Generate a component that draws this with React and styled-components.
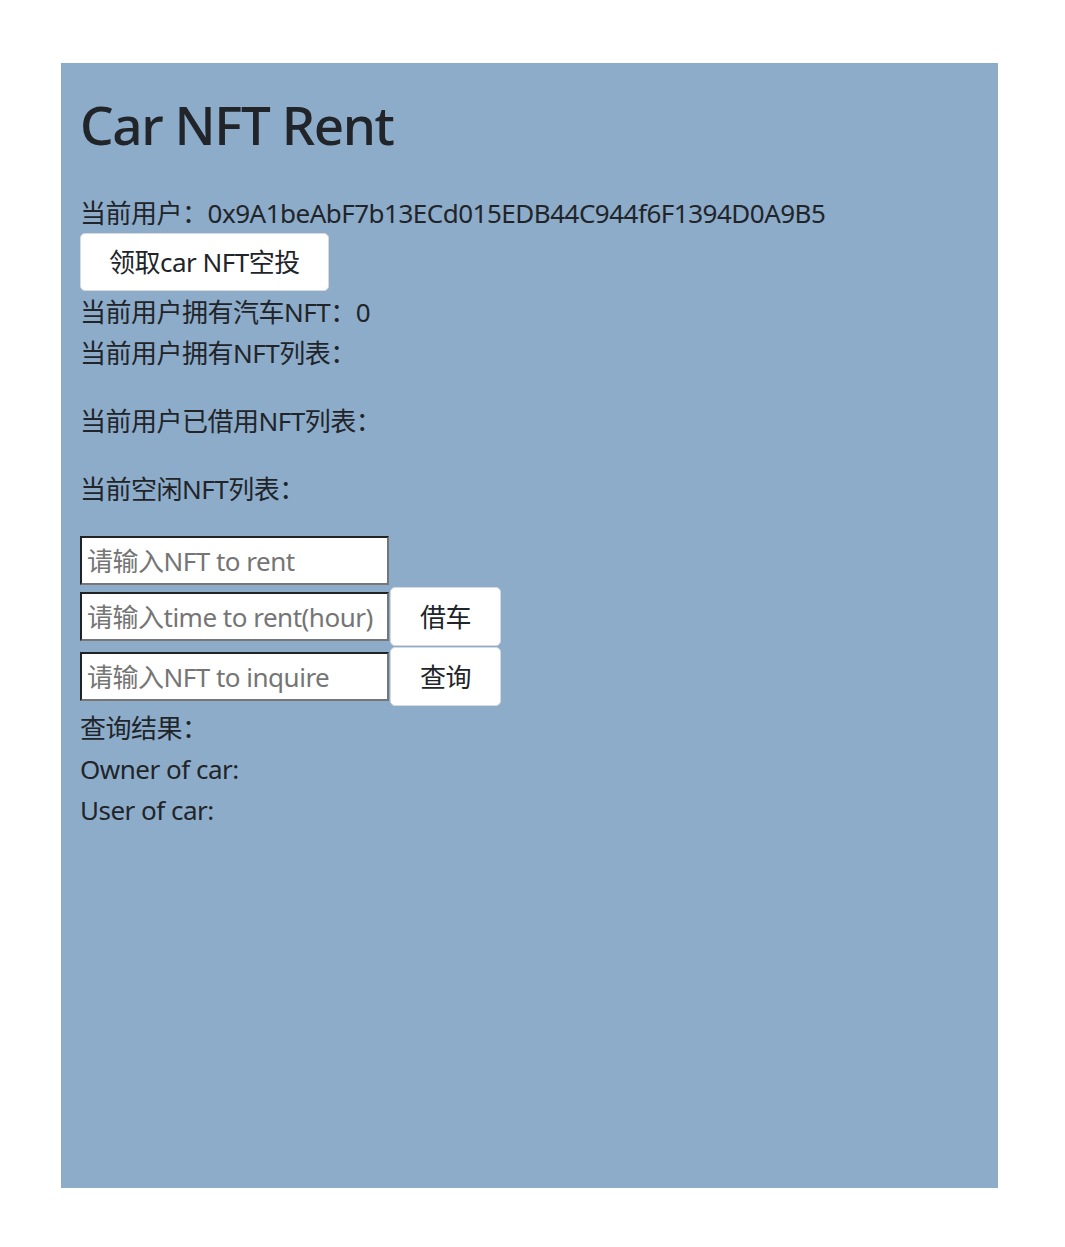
import React from "react";
import styled, { createGlobalStyle } from "styled-components";

const GlobalStyle = createGlobalStyle`
  html, body {
    margin: 0;
    padding: 0;
    background: #ffffff;
  }
  body {
    font-family: "Noto Sans", "Noto Sans CJK SC", sans-serif;
    color: #212529;
  }
`;

const Page = styled.div`
  padding: 63px 0 59px 61px;
`;

const Panel = styled.div`
  width: 937px;
  height: 1125px;
  box-sizing: border-box;
  background-color: #8dacca;
  padding: 26px 19px;
  font-size: 26px;
  line-height: 41px;
  letter-spacing: -0.5px;
`;

const Title = styled.h1`
  margin: 0 0 33px;
  font-size: 53px;
  font-weight: 500;
  line-height: 71px;
  letter-spacing: -1.4px;
`;

const Line = styled.div`
  white-space: nowrap;
`;

const List = styled.ul`
  margin: 0 0 27px;
  padding: 0;
  list-style: none;
`;

const Button = styled.button`
  display: block;
  font-family: inherit;
  font-size: 26px;
  line-height: 40px;
  letter-spacing: -0.5px;
  color: #212529;
  background-color: #ffffff;
  border: 1px solid #d6d9dd;
  border-radius: 5px;
  padding: 8px ${(p) => p.$px || 27}px;
  margin: ${(p) => p.$mt || 0}px 0 ${(p) => p.$mb || 0}px;
  cursor: pointer;
  box-sizing: border-box;
`;

const Form = styled.div`
  display: flex;
  flex-direction: column;
  margin-top: -1px;
  margin-bottom: 2px;
`;

const Row = styled.div`
  display: flex;
  align-items: center;
  margin-bottom: ${(p) => p.$mb || 0}px;
`;

const Input = styled.input`
  width: 309px;
  height: 49px;
  box-sizing: border-box;
  border: 2px solid #767676;
  border-top-color: #222222;
  border-left-color: #222222;
  padding: 0 5px;
  font-family: inherit;
  font-size: 26px;
  letter-spacing: -0.5px;
  color: #212529;
  background: #ffffff;
  outline: none;
  &::placeholder {
    color: #757575;
  }
`;

const RowButton = styled(Button)`
  width: 111px;
  height: 59px;
  padding: 0;
  margin: 0 0 0 1px;
`;

function App() {
  const address = "0x9A1beAbF7b13ECd015EDB44C944f6F1394D0A9B5";

  return (
    <>
      <GlobalStyle />
      <Page>
        <Panel>
          <Title>Car NFT Rent</Title>
          <Line>当前用户：{address}</Line>
          <Button $px={28} $mt={-1} $mb={1}>
            领取car NFT空投
          </Button>
          <Line>当前用户拥有汽车NFT：0</Line>
          <Line>当前用户拥有NFT列表：</Line>
          <List />
          <Line>当前用户已借用NFT列表：</Line>
          <List />
          <Line>当前空闲NFT列表：</Line>
          <List />
          <Form>
            <Row $mb={2}>
              <Input placeholder="请输入NFT to rent" />
            </Row>
            <Row $mb={1}>
              <Input placeholder="请输入time to rent(hour)" />
              <RowButton>借车</RowButton>
            </Row>
            <Row>
              <Input placeholder="请输入NFT to inquire" />
              <RowButton>查询</RowButton>
            </Row>
          </Form>
          <Line>查询结果：</Line>
          <Line>Owner of car:</Line>
          <Line>User of car:</Line>
        </Panel>
      </Page>
    </>
  );
}

export default App;
